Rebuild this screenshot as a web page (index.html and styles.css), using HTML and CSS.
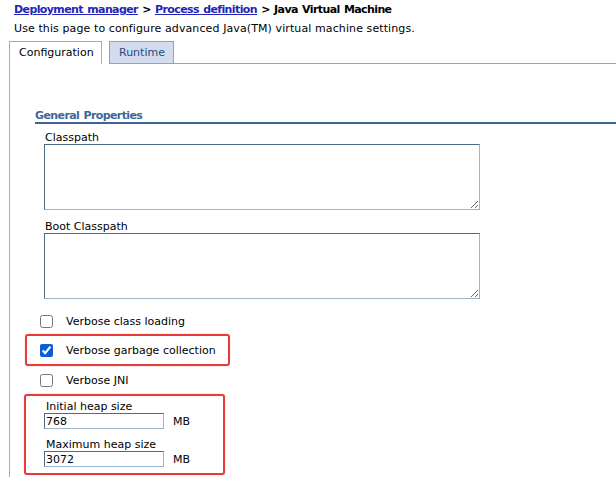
FILE: index.html
```html
<!DOCTYPE html>
<html>
<head>
<meta charset="utf-8">
<link rel="stylesheet" href="styles.css">
</head>
<body>
<div class="crumbs"><a href="#">Deployment manager</a> &gt; <a href="#">Process definition</a> &gt; Java Virtual Machine</div>
<div class="desc">Use this page to configure advanced Java(TM) virtual machine settings.</div>
<div class="tabs">
  <div class="tab active">Configuration</div>
  <div class="tab inactive">Runtime</div>
  <div class="tab-fill"></div>
</div>
<div class="panel">
  <div class="section-title">General Properties</div>
  <div class="fields">
    <div class="field">
      <label class="lbl">Classpath</label>
      <textarea class="ta"></textarea>
    </div>
    <div class="field">
      <label class="lbl">Boot Classpath</label>
      <textarea class="ta"></textarea>
    </div>
  </div>
  <div class="check-row first"><input type="checkbox" class="cb"><span>Verbose class loading</span></div>
  <div class="hl hl-check"><div class="check-row"><input type="checkbox" class="cb" checked><span>Verbose garbage collection</span></div></div>
  <div class="check-row third"><input type="checkbox" class="cb"><span>Verbose JNI</span></div>
  <div class="hl hl-heap">
    <div class="heap">
      <label class="lbl">Initial heap size</label>
      <div class="heap-row"><input type="text" class="inp" value="768"><span class="unit">MB</span></div>
    </div>
    <div class="heap">
      <label class="lbl">Maximum heap size</label>
      <div class="heap-row"><input type="text" class="inp" value="3072"><span class="unit">MB</span></div>
    </div>
  </div>
</div>
</body>
</html>
```
FILE: styles.css
```css
html, body {
  margin: 0;
  padding: 0;
  background: #fff;
  overflow: hidden;
}
body {
  font-family: "DejaVu Sans", Verdana, sans-serif;
  font-size: 11px;
  color: #000;
  width: 616px;
  height: 477px;
  display: flex;
  flex-direction: column;
}
.crumbs {
  padding: 3px 0 0 14px;
  line-height: 14px;
  font-weight: bold;
  letter-spacing: -0.6px;
  word-spacing: 1px;
}
.crumbs a {
  color: #2424b8;
  text-decoration: underline;
}
.desc {
  padding: 5px 0 0 14px;
  line-height: 14px;
  letter-spacing: 0.1px;
}
.tabs {
  display: flex;
  align-items: flex-end;
  margin-top: 5px;
  padding-left: 9px;
}
.tab {
  border: 1px solid #8ea4bd;
  border-bottom: none;
  padding: 0 9px;
  box-sizing: content-box;
}
.tab.active {
  height: 22px;
  line-height: 22px;
  background: #fff;
  width: 73px;
  border-color: #9aaec4;
}
.tab.inactive {
  margin-left: 7px;
  height: 21px;
  line-height: 21px;
  background: #d2dcee;
  color: #2a4a7a;
  border-bottom: 1px solid #8ea4bd;
  width: 45px;
}
.tab-fill {
  flex: 1;
  border-bottom: 1px solid #8ea4bd;
}
.panel {
  flex: 1;
  min-height: 0;
  overflow: hidden;
  margin-left: 9px;
  border-left: 1px solid #9aaec4;
  padding-left: 25px;
}
.section-title {
  margin-top: 46px;
  color: #3d6797;
  font-weight: bold;
  line-height: 12px;
  letter-spacing: -0.6px;
  word-spacing: 1px;
  border-bottom: 2px solid #3a6595;
}
.fields {
  padding-left: 9px;
  margin-top: 7px;
}
.field {
  display: flex;
  flex-direction: column;
}
.field + .field {
  margin-top: 10px;
}
.lbl {
  display: block;
  padding-left: 1px;
  line-height: 13px;
}
.ta {
  display: block;
  width: 436px;
  height: 66px;
  box-sizing: border-box;
  margin: 0;
  border: 1px solid;
  border-color: #4b6a86 #9fb4c6 #9fb4c6 #4b6a86;
  resize: both;
  font: inherit;
}
.check-row {
  display: flex;
  align-items: center;
  height: 16px;
  padding-left: 5px;
}
.check-row span {
  margin-left: 13px;
}
.check-row.first {
  margin-top: 14px;
}
.check-row.third {
  margin-top: 6px;
}
.cb {
  width: 13px;
  height: 13px;
  margin: 0;
  accent-color: #0b5cd5;
}
.hl {
  border: 2px solid #e83a36;
  border-radius: 3px;
  box-shadow: 0 0 1px #f07070;
}
.hl-check {
  width: 193px;
  margin: 5px 0 0 -10px;
  padding: 6px 0 6px 8px;
}
.hl-heap {
  width: 179px;
  margin: 6px 0 0 -11px;
  padding: 4px 0 6px 18px;
}
.heap .lbl {
  padding-left: 2px;
}
.heap + .heap {
  margin-top: 9px;
}
.heap-row {
  display: flex;
  align-items: center;
}
.inp {
  width: 120px;
  height: 16px;
  box-sizing: border-box;
  margin: 0;
  padding: 0 1px;
  border: 1px solid;
  border-color: #4b6a86 #9fb4c6 #9fb4c6 #4b6a86;
  font: inherit;
  color: #000;
}
.unit {
  margin-left: 9px;
}
```
